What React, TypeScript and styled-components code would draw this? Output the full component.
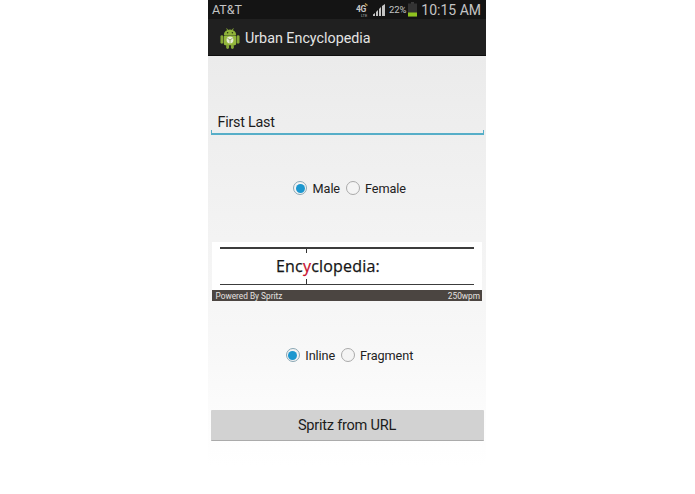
import React from "react";
import styled, { createGlobalStyle } from "styled-components";

const Global = createGlobalStyle`
  html, body { margin: 0; padding: 0; background: #fff; }
  body { font-family: Roboto, "Liberation Sans", sans-serif; }
`;
const Page = styled.div`
  width: 695px; height: 494px; display: flex; justify-content: center; overflow: hidden; background: #fff;
`;
const Phone = styled.div`
  width: 278px; margin-right: 1px; height: 494px; display: flex; flex-direction: column;
`;
const StatusBar = styled.div`
  height: 19px; background: #141414; display: flex; align-items: center; padding: 0 5px 0 4px; color: #c4c4c4; font-size: 12.5px;
`;
const Carrier = styled.span` flex: 1; `;
const StatusIcons = styled.svg` display: block; `;
const Percent = styled.span` font-size: 9.5px; letter-spacing: -0.1px; margin: 0 2px 0 2px; `;
const BatteryIcon = styled.svg` display: block; `;
const Clock = styled.span` font-size: 14px; margin-left: 4px; `;
const ActionBar = styled.div`
  height: 37px; background: #202020; border-bottom: 1px solid #0e0e0e; box-sizing: border-box;
  display: flex; align-items: center; padding: 1px 0 0 12px; gap: 5px; color: #e4e4e4; font-size: 14.3px;
`;
const LogoIcon = styled.svg` display: block; `;
const Content = styled.div`
  flex: 1; display: flex; flex-direction: column; align-items: center;
  background: linear-gradient(#ebebeb 0%, #f8f8f8 72%, #ffffff 100%);
  background-size: 100% 410px; background-repeat: no-repeat;
`;
const NameField = styled.div`
  width: 273px; margin-top: 56px; height: 23px; box-sizing: border-box; padding: 0 0 1px 7px;
  display: flex; align-items: center; font-size: 14.4px; letter-spacing: -0.25px; color: #1c1c1c; position: relative;
  border-bottom: 2px solid #56aec8;
  &::before, &::after { content: ""; position: absolute; bottom: 0; width: 1px; height: 3px; background: #56aec8; }
  &::before { left: 0; } &::after { right: 0; }
`;
const RadioRow = styled.div<{ $top: number }>`
  display: flex; align-items: center; margin: ${p => p.$top}px 0 0 5px;
  height: 16px; gap: 5.5px; font-size: 12.7px; letter-spacing: -0.1px; color: #222;
`;
const Radio = styled.span<{ $on?: boolean }>`
  width: 14px; height: 14px; border-radius: 50%; box-sizing: border-box; background: #f4f4f4;
  border: 1px solid ${p => (p.$on ? "#8aa7b4" : "#aaa")}; display: flex; align-items: center; justify-content: center;
  &::after { content: ""; width: 9px; height: 9px; border-radius: 50%; background: ${p => (p.$on ? "#1c97cf" : "transparent")}; }
`;
const Spritz = styled.div`
  margin-top: 46px; width: 270px; height: 59px; background: #fff; display: flex; flex-direction: column;
`;
const Reader = styled.div`
  height: 48px; margin: 0 8px; position: relative;
`;
const Rule = styled.div<{ $bottom?: boolean }>`
  position: absolute; left: 0; right: 0; background: #3c3c3c;
  ${p => (p.$bottom ? "top: 42px; height: 1px;" : "top: 5px; height: 2px;")}
  &::after {
    content: ""; position: absolute; left: 86px; width: 1px; background: #333;
    ${p => (p.$bottom ? "bottom: 1px; height: 5px;" : "top: 2px; height: 4px;")}
  }
`;
const Word = styled.div`
  position: absolute; left: 56px; top: 14px; font-family: "Open Sans", sans-serif; font-size: 16px; font-weight: 500; line-height: 20px; color: #151515; letter-spacing: 0.2px; -webkit-text-stroke: 0.25px currentColor;
`;
const Pivot = styled.span` color: #c8102e; `;
const PoweredBar = styled.div`
  height: 11px; background: #4b4541; color: #e6e3e0; font-size: 8.3px; display: flex; align-items: center; justify-content: space-between; padding: 0 2px 0 3.5px;
`;
const Button = styled.div`
  margin-top: 47px; width: 273px; height: 31px; box-sizing: border-box; background: #d2d2d2; border-bottom: 1px solid #aaa;
  display: flex; align-items: center; justify-content: center; font-size: 14.6px; letter-spacing: -0.25px; color: #1c1c1c; border-radius: 1px;
`;

export default function App() {
  return (
    <Page>
      <Global />
      <Phone>
        <StatusBar>
          <Carrier>AT&amp;T</Carrier>
          <StatusIcons width="33" height="16" viewBox="0 0 33 16">
            <text x="2" y="10" fontSize="8.5" fontWeight="700" fill="#c8c8c8" fontFamily="Roboto, sans-serif" letterSpacing="-0.5">4G</text>
            <text x="7" y="14.5" fontSize="4" fill="#aaa" fontFamily="Roboto, sans-serif">LTE</text>
            <path d="M11 1.5 13.5 3.5" stroke="#c8a050" strokeWidth="1.2" />
            <path d="M19 14 V12.5 L21 11 V14Z M22 14 V10 L24 8 V14Z M25 14 V7 L27 5 V14Z M28 14 V4 L31 2 V14Z" fill="#c4c4c4" />
          </StatusIcons>
          <Percent>22%</Percent>
          <BatteryIcon width="9" height="15" viewBox="0 0 9 15">
            <rect x="3" y="0" width="3" height="2" fill="#3a3a3a" />
            <rect x="0" y="1.5" width="9" height="13" fill="#333" />
            <rect x="0" y="10.5" width="9" height="4" fill="#8fc31f" />
          </BatteryIcon>
          <Clock>10:15 AM</Clock>
        </StatusBar>
        <ActionBar>
          <LogoIcon width="20" height="22" viewBox="0 0 21 23">
            <path d="M7 1.5 8.5 4M14 1.5 12.5 4" stroke="#8fb339" strokeWidth="1" />
            <path d="M4 8.5a6.5 6 0 0 1 13 0Z" fill="#8fb339" />
            <rect x="4" y="9" width="13" height="10" rx="1.5" fill="#94b83c" />
            <rect x="0.5" y="8.5" width="3" height="9" rx="1.5" fill="#86a836" />
            <rect x="17.5" y="8.5" width="3" height="9" rx="1.5" fill="#86a836" />
            <rect x="6.5" y="18" width="3" height="5" rx="1.5" fill="#86a836" />
            <rect x="11.5" y="18" width="3" height="5" rx="1.5" fill="#86a836" />
            <circle cx="10.5" cy="13.5" r="3.6" fill="#e6ecd6" />
            <path d="M10.5 13.5 7.8 11.8M10.5 13.5 13.2 11.8M10.5 13.5V16.5" stroke="#8fa060" strokeWidth="1" />
            <circle cx="8" cy="6" r="0.8" fill="#263010" />
            <circle cx="13" cy="6" r="0.8" fill="#263010" />
          </LogoIcon>
          <span>Urban Encyclopedia</span>
        </ActionBar>
        <Content>
          <NameField>First Last</NameField>
          <RadioRow $top={45}>
            <Radio $on />
            <span>Male</span>
            <Radio />
            <span>Female</span>
          </RadioRow>
          <Spritz>
            <Reader>
              <Rule />
              <Word>Enc<Pivot>y</Pivot>clopedia:</Word>
              <Rule $bottom />
            </Reader>
            <PoweredBar>
              <span>Powered By Spritz</span>
              <span>250wpm</span>
            </PoweredBar>
          </Spritz>
          <RadioRow $top={46}>
            <Radio $on />
            <span>Inline</span>
            <Radio />
            <span>Fragment</span>
          </RadioRow>
          <Button>Spritz from URL</Button>
        </Content>
      </Phone>
    </Page>
  );
}
